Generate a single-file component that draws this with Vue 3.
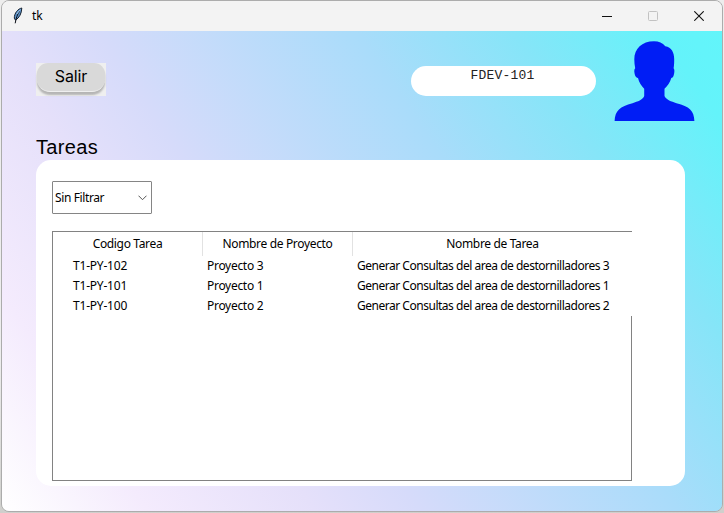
<script setup>
const columns = ['Codigo Tarea', 'Nombre de Proyecto', 'Nombre de Tarea']
const tasks = [
  { code: 'T1-PY-102', project: 'Proyecto 3', name: 'Generar Consultas del area de destornilladores 3' },
  { code: 'T1-PY-101', project: 'Proyecto 1', name: 'Generar Consultas del area de destornilladores 1' },
  { code: 'T1-PY-100', project: 'Proyecto 2', name: 'Generar Consultas del area de destornilladores 2' }
]
</script>

<template>
  <div class="desktop">
    <div class="window">
      <header class="titlebar">
        <svg class="feather" width="12" height="18" viewBox="0 0 12 18">
          <path d="M9.8 1C6 1.8 2.2 6.2 2.3 11.2L3.5 13.2C7.4 10.6 9.6 6.6 9.8 1Z" fill="#5d93cb" stroke="#15202e" stroke-width="1" />
          <path d="M7.6 4.2C5.3 7.4 4.2 10.5 3.2 16.3" fill="none" stroke="#0b0f16" stroke-width="1" />
          <path d="M8.2 2.8L4.8 7" stroke="#a9cdf0" stroke-width="1" />
        </svg>
        <span class="title">tk</span>
        <div class="controls">
          <svg width="10" height="10" viewBox="0 0 10 10"><path d="M0 5.5H10" stroke="#111" /></svg>
          <svg width="10" height="10" viewBox="0 0 10 10"><rect x=".5" y=".5" width="9" height="9" rx="1" fill="none" stroke="#c2c2c2" /></svg>
          <svg width="10" height="10" viewBox="0 0 10 10"><path d="M.3 .3L9.7 9.7M9.7 .3L.3 9.7" stroke="#111" stroke-width="1.1" /></svg>
        </div>
      </header>

      <main class="content">
        <div class="top">
          <div class="exit-box"><button class="exit">Salir</button></div>
          <div class="user">FDEV-101</div>
          <svg class="avatar" width="81" height="80" viewBox="0 0 81 80.6" preserveAspectRatio="none">
            <path d="M40 .3C45 .3 48.5 2 51.3 5.2C57.5 6 60.2 11.5 60.2 18.5C60.2 22 60.1 25 59.6 27.5C61 29 60.3 33 59.5 35.2C59 36.6 58.2 37 57.3 37.2C56 41.5 53.5 45.5 50.5 48V55.5C52.5 59.5 57 61 62.5 62.6C75.5 66 80 70 80.4 80.5H.6C1 70 6 66 18.5 62.6C24 61 28.5 59.5 30.2 55.5V48C27.5 45.5 25 41.5 24 37.2C22.5 37 21.5 36 21 34.5C20.3 32 19.7 29 21.2 27.5C20.6 24.5 20.3 21.5 20.3 18.5C20.3 8 28 .3 40 .3Z" fill="#001df5" />
          </svg>
        </div>

        <h1 class="heading">Tareas</h1>

        <section class="panel">
          <button class="filter">
            <span>Sin Filtrar</span>
            <svg width="9" height="6" viewBox="0 0 9 6"><path d="M.5 .7L4.5 4.7L8.5 .7" fill="none" stroke="#555" /></svg>
          </button>

          <div class="table">
            <div class="row head">
              <div v-for="column in columns" :key="column" class="th"><span>{{ column }}</span></div>
            </div>
            <div v-for="task in tasks" :key="task.code" class="row">
              <div class="td code">{{ task.code }}</div>
              <div class="td">{{ task.project }}</div>
              <div class="td name">{{ task.name }}</div>
            </div>
            <div class="blank"></div>
          </div>
        </section>
      </main>
    </div>
  </div>
</template>

<style>
body { margin: 0; }
</style>

<style scoped>
.desktop {
  box-sizing: border-box;
  width: 724px;
  height: 513px;
  padding: 0 1px 1px;
  background: linear-gradient(#ededed 0 70%, #cfcfcc);
  font: 12px/16px "Noto Sans", sans-serif;
  color: #000;
  overflow: hidden;
}
.window {
  box-sizing: border-box;
  height: 512px;
  border: 1px solid #acacac;
  border-radius: 8px;
  overflow: hidden;
  display: flex;
  flex-direction: column;
}
.titlebar {
  height: 30px;
  flex: none;
  display: flex;
  align-items: center;
  background: #f3f3f3;
  padding: 0 18px 0 10px;
}
.title { margin-left: 8px; letter-spacing: -.2px; }
.controls { margin-left: auto; display: flex; gap: 36px; }
.controls svg { display: block; }
.content {
  flex: 1;
  padding: 10px 27px 0 34px;
  background: linear-gradient(56deg, #fff 0%, #f4ebfd 14%, #e5e0fa 30%, #d6dbfa 40%, #a9dcfa 65%, #86e5f8 80%, #64f3fa 94%, #62f5fa 100%);
}
.top { display: flex; height: 81px; }
.exit-box {
  box-sizing: border-box;
  width: 70px;
  height: 33px;
  margin-top: 22px;
  padding: 0 1px;
  background: #efefef;
}
.exit {
  display: block;
  width: 68px;
  height: 29px;
  padding: 0 0 3px;
  border: 0;
  border-bottom: 1px solid #efefef;
  border-radius: 11px 11px 13px 13px;
  background: #d9d9d9;
  box-shadow: 0 3px 2px #b5b5b5;
  font: 16px/22px Inter, sans-serif;
  letter-spacing: -.1px;
  color: #000;
}
.user {
  box-sizing: border-box;
  width: 185px;
  height: 30px;
  padding-right: 2px;
  margin: 25px 18px 0 305px;
  border-radius: 15px;
  background: #fff;
  font: 13px/19px "Liberation Mono", monospace;
  letter-spacing: .2px;
  text-align: center;
  color: #222;
}
.heading {
  margin: 0;
  height: 38px;
  padding-top: 13px;
  box-sizing: border-box;
  font: 20px/24px "Liberation Sans", sans-serif;
  letter-spacing: .35px;
}
.panel {
  box-sizing: border-box;
  width: 649px;
  height: 326px;
  padding: 21px 16px 0;
  border-radius: 15px;
  background: #fff;
}
.filter {
  box-sizing: border-box;
  width: 100px;
  height: 33px;
  padding: 0 4px 0 2px;
  border: 1px solid #858585;
  border-radius: 1px;
  background: #fff;
  color: #000;
  font: inherit;
  letter-spacing: -.38px;
  display: flex;
  align-items: center;
  justify-content: space-between;
}
.table {
  box-sizing: border-box;
  width: 580px;
  height: 250px;
  margin-top: 17px;
  border: solid #828282;
  border-width: 1px 0 1px 1px;
  display: flex;
  flex-direction: column;
}
.row {
  display: grid;
  grid-template-columns: 150px 150px 279px;
  height: 20px;
  line-height: 20px;
  letter-spacing: -.3px;
}
.head { height: 24px; line-height: 24px; letter-spacing: -.34px; }
.th { box-sizing: border-box; border-right: 1px solid #e2e2e2; text-align: center; }
.th:last-child { border-right: 0; }
.td { padding-left: 4px; white-space: nowrap; }
.code { padding-left: 20px; letter-spacing: -.2px; }
.name { letter-spacing: -.48px; }
.blank { flex: 1; border-right: 1px solid #828282; }
</style>
